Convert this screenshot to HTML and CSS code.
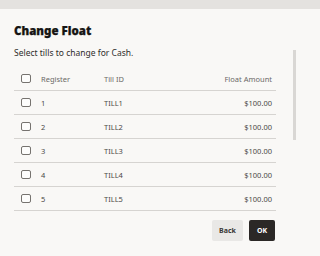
FILE: index.html
```html
<!DOCTYPE html>
<html>
<head>
<meta charset="utf-8">
<link rel="stylesheet" href="styles.css">
</head>
<body>
<div class="backdrop"></div>
<div class="dialog">
  <h1 class="title">Change Float</h1>
  <p class="subtitle">Select tills to change for Cash.</p>
  <div class="table">
    <div class="row head">
      <span class="cell check"><span class="box"></span></span>
      <span class="cell reg">Register</span>
      <span class="cell till">Till ID</span>
      <span class="cell amt">Float Amount</span>
    </div>
    <div class="row">
      <span class="cell check"><span class="box"></span></span>
      <span class="cell reg">1</span>
      <span class="cell till">TILL1</span>
      <span class="cell amt">$100.00</span>
    </div>
    <div class="row">
      <span class="cell check"><span class="box"></span></span>
      <span class="cell reg">2</span>
      <span class="cell till">TILL2</span>
      <span class="cell amt">$100.00</span>
    </div>
    <div class="row">
      <span class="cell check"><span class="box"></span></span>
      <span class="cell reg">3</span>
      <span class="cell till">TILL3</span>
      <span class="cell amt">$100.00</span>
    </div>
    <div class="row">
      <span class="cell check"><span class="box"></span></span>
      <span class="cell reg">4</span>
      <span class="cell till">TILL4</span>
      <span class="cell amt">$100.00</span>
    </div>
    <div class="row">
      <span class="cell check"><span class="box"></span></span>
      <span class="cell reg">5</span>
      <span class="cell till">TILL5</span>
      <span class="cell amt">$100.00</span>
    </div>
  </div>
  <div class="actions">
    <button class="btn back">Back</button>
    <button class="btn ok">OK</button>
  </div>
  <div class="scrollbar"></div>
</div>
</body>
</html>
```
FILE: styles.css
```css
html {
  margin: 0;
  padding: 0;
  background: linear-gradient(#e4e2df 0, #e4e2df 9px, #f9f8f6 9px);
}
body {
  margin: 0;
  padding: 0;
  width: 296px;
  height: 256px;
  overflow: hidden;
  font-family: "Noto Sans", "Open Sans", sans-serif;
}
.backdrop {
  height: 9px;
  background: #e4e2df;
}
.dialog {
  position: relative;
  background: #f9f8f6;
  height: 247px;
  padding: 0 20px 0 14px;
  box-sizing: border-box;
}
.title {
  margin: 0;
  padding-top: 13.5px;
  font-size: 11.5px;
  line-height: 16px;
  font-weight: 900;
  color: #161513;
  -webkit-text-stroke: 0.25px #161513;
}
.subtitle {
  margin: 8px 0 0;
  font-size: 8.5px;
  line-height: 12px;
  color: #2f2d2b;
}
.table {
  margin-top: 8.5px;
}
.row {
  display: flex;
  align-items: center;
  height: 24px;
  border-bottom: 1px solid #d6d4d1;
  box-sizing: border-box;
  font-size: 7.5px;
  color: #4a4846;
}
.row.head {
  color: #6b6966;
}
.cell.check {
  width: 27px;
  padding-left: 7px;
  box-sizing: border-box;
  display: flex;
  align-items: center;
}
.box {
  width: 9.5px;
  height: 9.5px;
  border: 1px solid #76736f;
  border-radius: 2px;
  box-sizing: border-box;
  background: #fdfdfc;
}
.cell.reg {
  width: 63px;
}
.cell.till {
  flex: 1;
}
.cell.amt {
  text-align: right;
  padding-right: 4px;
}
.actions {
  display: flex;
  justify-content: flex-end;
  gap: 6px;
  margin-top: 9px;
  padding-right: 1px;
}
.btn {
  font-family: "Noto Sans", "Open Sans", sans-serif;
  font-size: 7px;
  font-weight: 700;
  height: 21px;
  border: none;
  border-radius: 2px;
  padding: 0;
}
.btn.back {
  width: 31px;
  background: #e9e8e6;
  color: #3a3836;
}
.btn.ok {
  width: 26px;
  background: #2b2826;
  color: #ffffff;
}
.scrollbar {
  position: absolute;
  right: 0;
  top: 41px;
  width: 3px;
  height: 90px;
  background: #d9d7d4;
}
```
